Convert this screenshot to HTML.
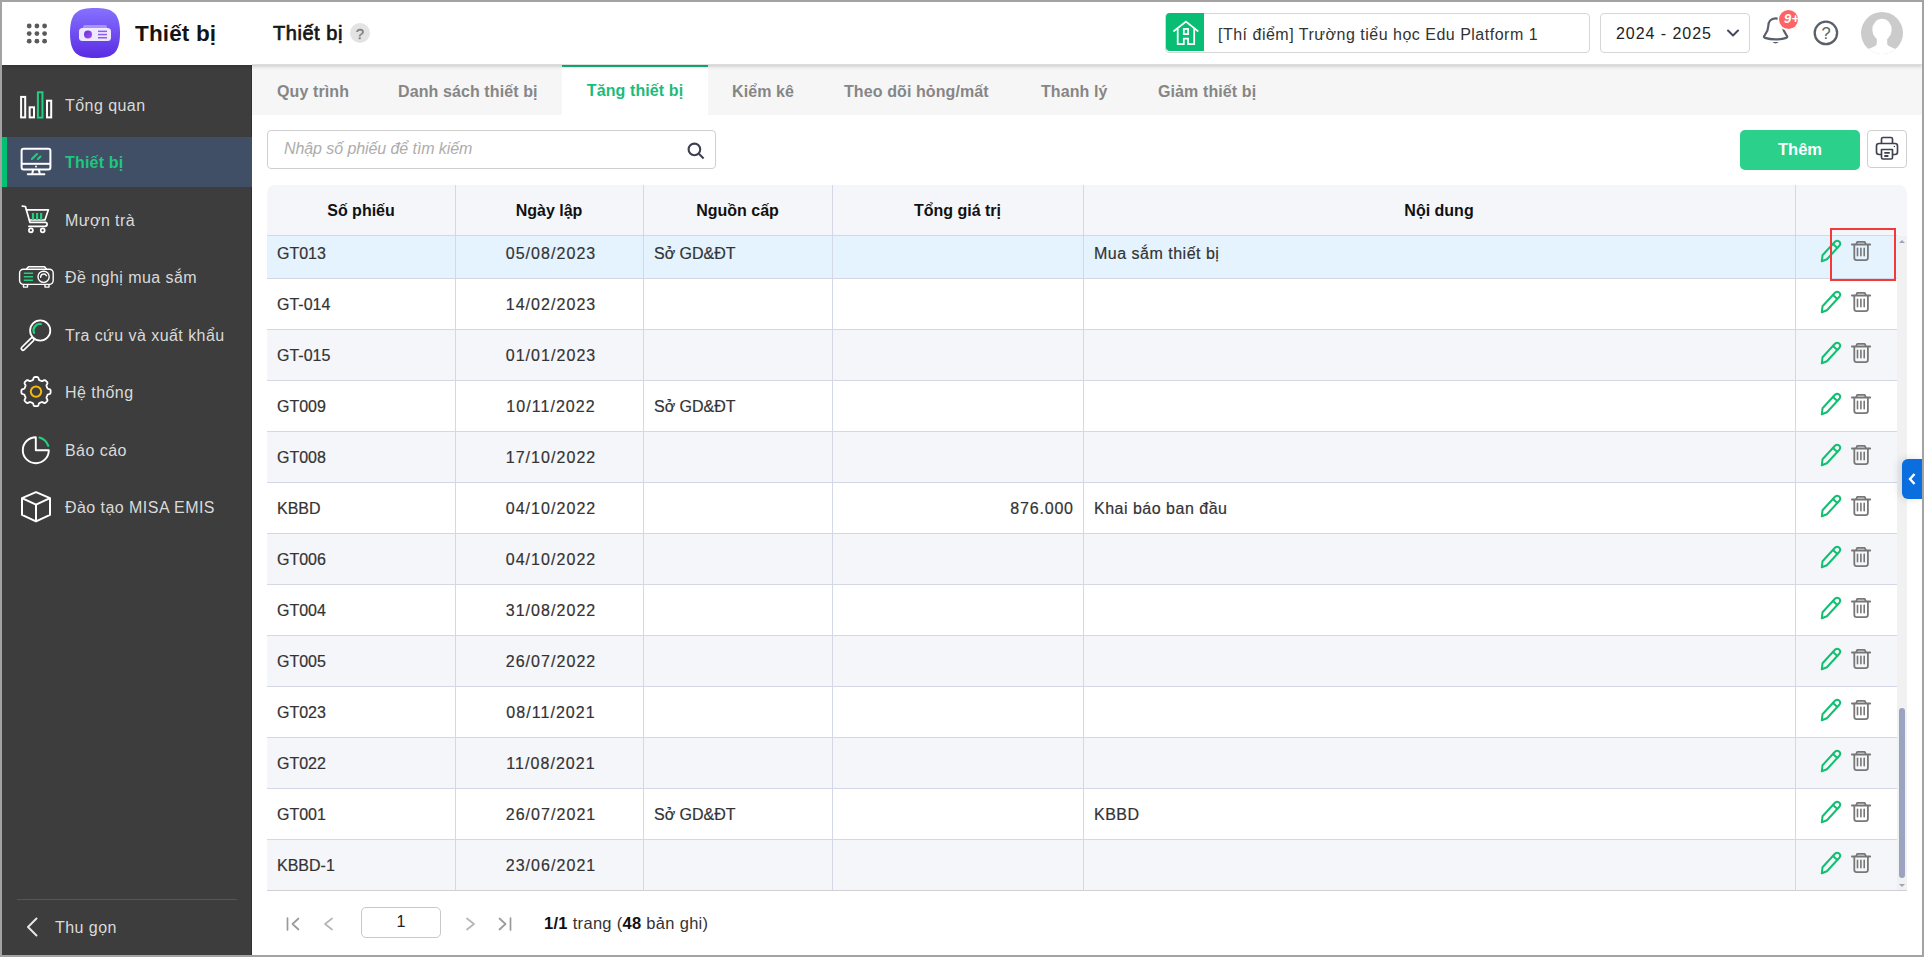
<!DOCTYPE html>
<html lang="vi">
<head>
<meta charset="utf-8">
<title>Thiết bị - Tăng thiết bị</title>
<style>
*{box-sizing:border-box;margin:0;padding:0}
html,body{width:1924px;height:957px;overflow:hidden;background:#fff}
body{font-family:"Liberation Sans",sans-serif;font-size:16px;color:#2f2f2f;position:relative}
.abs{position:absolute}
#frame{position:absolute;left:0;top:0;width:1924px;height:957px;border:2px solid #a3a3a3;z-index:100;pointer-events:none}
/* ---------- header ---------- */
#header{position:absolute;left:2px;top:2px;width:1920px;height:63px;background:#fff;box-shadow:0 1px 4px rgba(0,0,0,.22);z-index:20}
#header .t{position:absolute;white-space:nowrap}
#appname{left:133px;top:16.5px;font-size:22.5px;font-weight:bold;color:#141414;letter-spacing:.15px;line-height:30px}
#pagetitle{left:271px;top:18px;font-size:20px;font-weight:normal;-webkit-text-stroke:.7px #161616;color:#161616;line-height:26px;letter-spacing:.55px}
#qmark{position:absolute;left:348px;top:21px;width:20px;height:20px;border-radius:50%;background:#e3e3e3;color:#7a7a7a;font-size:15px;-webkit-text-stroke:.3px #7a7a7a;text-align:center;line-height:21px}
.selbox{position:absolute;top:11px;height:40px;border:1px solid #d6d6d6;border-radius:4px;background:#fff;overflow:hidden}
/* ---------- sidebar ---------- */
#sidebar{position:absolute;left:2px;top:65px;width:250px;height:890px;background:#3d3d3d;z-index:10;box-shadow:inset -1px 0 0 #313131}
.mi{position:absolute;left:0;width:250px;height:50px;color:#dadada;font-size:16px;line-height:52px;white-space:nowrap;letter-spacing:.45px}
.mi span{position:absolute;left:63px;top:0}
.mi svg{position:absolute;left:16px;top:7px}
.mi.active{background:#404e66;color:#1fc77e;font-weight:bold;letter-spacing:.2px}
.mi.active::before{content:"";position:absolute;left:0;top:0;width:5px;height:50px;background:#00c171}
/* ---------- content ---------- */
#tabs{position:absolute;left:252px;top:65px;width:1670px;height:50px;background:#f6f6f6}
.tab{position:absolute;top:0;height:50px;line-height:54px;letter-spacing:.1px;font-size:16px;font-weight:bold;color:#868686;white-space:nowrap}
.tab.on{background:#fff;color:#1dbb7a;border-top:2px solid #14b873;line-height:47px;text-align:center}
#search{position:absolute;left:267px;top:130px;width:449px;height:39px;border:1px solid #cfcfcf;border-radius:4px;background:#fff}
#search i{position:absolute;left:16px;top:0;line-height:36px;font-size:16px;color:#adadad;font-style:italic;white-space:nowrap;letter-spacing:-.08px}
#btnadd{position:absolute;left:1740px;top:130px;width:120px;height:40px;border-radius:5px;background:#2bd18b;color:#fff;font-weight:bold;font-size:16.5px;text-align:center;line-height:39px}
#btnprint{position:absolute;left:1867px;top:130px;width:40px;height:38px;border:1px solid #cfcfcf;border-radius:4px;background:#fff}
/* ---------- table ---------- */
#thead{position:absolute;left:267px;top:185px;width:1640px;height:51px;background:#f5f6fa;border-radius:8px 8px 0 0}
#thead::after{content:"";position:absolute;left:0;top:50px;width:1630px;height:1px;background:#d3d7e6}
.th{position:absolute;top:0;height:50px;line-height:52px;text-align:center;font-weight:bold;font-size:16px;color:#111}
.vl{position:absolute;top:185px;width:1px;height:705px;background:#d3d7e6;z-index:3}
.row{position:absolute;left:267px;width:1630px;height:51px;border-bottom:1px solid #d3d7e6;font-size:16px;color:#333;line-height:52px;white-space:nowrap;-webkit-text-stroke:.2px #333}
.row.g{background:#f5f6fa}
.row.sel{background:#e5f3ff}
.row .c{position:absolute;top:0;height:50px}
.c1{left:10px}
.c2{left:190px;width:188px;text-align:center;letter-spacing:1.05px}
.c3{left:387px}
.c4{left:566px;width:240.8px;text-align:right;letter-spacing:.8px}
.c5{left:827px;letter-spacing:.5px}
.row svg.pen{position:absolute;left:1552px;top:10px}
.row svg.bin{position:absolute;left:1583px;top:12px}
#vscroll{position:absolute;left:1897px;top:236px;width:10px;height:654px;background:#f1f1f1}
#vthumb{position:absolute;left:2px;top:472px;width:6px;height:169.5px;border-radius:3px;background:#9aa3bf}
#tbottom{position:absolute;left:267px;top:890px;width:1640px;height:1px;background:#cfcfd4}
#redbox{position:absolute;left:1830px;top:228px;width:66px;height:53px;border:2px solid #f23a3a;z-index:8}
#sidetab{position:absolute;left:1902px;top:459px;width:20px;height:40px;border-radius:6px 0 0 6px;background:#0b6ede;z-index:9;box-shadow:-3px 0 8px rgba(0,0,0,.12)}
/* ---------- pager ---------- */
#pager .t{position:absolute;white-space:nowrap}
#pginput{position:absolute;left:361px;top:907px;width:80px;height:31px;border:1px solid #c9c9c9;border-radius:5px;text-align:center;line-height:28px;font-size:16px;color:#222}
</style>
</head>
<body>
<div id="frame"></div>

<!-- HEADER -->
<div id="header">
  <svg class="abs" style="left:22px;top:18.500px" width="26" height="26" viewBox="0 0 26 26" fill="#5a5a5a">
    <circle cx="5.200" cy="5" r="2.400"/><circle cx="12.900" cy="5" r="2.400"/><circle cx="20.600" cy="5" r="2.400"/>
    <circle cx="5.200" cy="12.600" r="2.400"/><circle cx="12.900" cy="12.600" r="2.400"/><circle cx="20.600" cy="12.600" r="2.400"/>
    <circle cx="5.200" cy="20.200" r="2.400"/><circle cx="12.900" cy="20.200" r="2.400"/><circle cx="20.600" cy="20.200" r="2.400"/>
  </svg>
  <svg class="abs" style="left:68px;top:6px" width="50" height="50" viewBox="0 0 50 50">
    <defs><linearGradient id="pg" x1="0" y1="0" x2="0" y2="1"><stop offset="0" stop-color="#8672ff"/><stop offset="1" stop-color="#5a2be2"/></linearGradient>
    <linearGradient id="pl" x1="0" y1="0" x2="1" y2="1"><stop offset="0" stop-color="#5b33e0"/><stop offset="1" stop-color="#b14fe0"/></linearGradient></defs>
    <path d="M25 0 C42 0 50 4 50 25 C50 46 42 50 25 50 C8 50 0 46 0 25 C0 4 8 0 25 0Z" fill="url(#pg)"/>
    <path d="M13 19 Q13 17 15 17 H35 Q37 17 37 19 V21 H13Z" fill="#b9a8ff" opacity=".75"/>
    <rect x="9" y="20" width="32" height="13" rx="3.5" fill="#efe9ff"/>
    <circle cx="18" cy="26.5" r="4" fill="url(#pl)"/>
    <rect x="28" y="22.6" width="9" height="1.5" fill="#8f5be8"/><rect x="28" y="25.8" width="9" height="1.5" fill="#8f5be8"/><rect x="28" y="29" width="9" height="1.5" fill="#8f5be8"/>
  </svg>
  <div class="abs" style="left:250px;top:62px;width:1670px;height:1px;background:rgba(0,0,0,.13)"></div>
  <div class="t" id="appname">Thiết bị</div>
  <div class="t" id="pagetitle">Thiết bị</div>
  <div id="qmark">?</div>

  <div class="selbox" style="left:1163px;width:425px;height:39.500px;overflow:visible">
    <div class="abs" style="left:-.3px;top:-1px;width:38.300px;height:38.200px;background:#08bd74;border-radius:4px 0 0 4px"></div>
    <svg class="abs" style="left:6px;top:5px" width="28" height="28" viewBox="0 0 28 28" fill="none" stroke="#fff" stroke-width="1.750" stroke-linejoin="miter">
      <path d="M2 12 L13.950 2.550 L25.700 12" stroke-linecap="round"/><path d="M5.700 9.500 V25.050 H11.800 V19.600 H16.050 V25.050 H22.200 V9.500"/><rect x="11.800" y="9.950" width="4.300" height="5.200"/>
    </svg>
    <div class="abs" style="left:52px;top:0;line-height:41px;font-size:16px;color:#333;white-space:nowrap;letter-spacing:.5px">[Thí điểm] Trường tiểu học Edu Platform 1</div>
  </div>
  <div class="selbox" style="left:1598px;width:150px">
    <div class="abs" style="left:15px;top:0;line-height:40px;font-size:16px;color:#222;white-space:nowrap;letter-spacing:.95px">2024 - 2025</div>
    <svg class="abs" style="left:125px;top:14px" width="14" height="10" viewBox="0 0 14 10" fill="none" stroke="#444a5c" stroke-width="2" stroke-linecap="round" stroke-linejoin="round"><path d="M2 2.5 L7 7.5 L12 2.5"/></svg>
  </div>
  <!-- bell -->
  <svg class="abs" style="left:1758px;top:12px" width="32" height="34" viewBox="0 0 32 34" fill="none" stroke="#5a616c" stroke-width="2.200" stroke-linecap="round" stroke-linejoin="round">
    <path d="M15.600 4.300 C10.500 4.300 8.300 8 8.300 12 C8.300 17 6 19.500 4.300 21.800 C3.600 22.900 4 23.600 5 23.900 C11 25.900 20.200 25.900 26.200 23.900 C27.200 23.600 27.600 22.900 26.900 21.800 C25.200 19.500 22.900 17 22.900 12 C22.900 8 20.700 4.300 15.600 4.300Z"/>
    <path d="M12.400 28.100 Q15.600 30.800 18.800 28.100 Z" fill="#5a616c" stroke="none"/>
  </svg>
  <div class="abs" style="left:1777px;top:8px;width:19px;height:19px;border-radius:50%;background:#ff6464;box-shadow:0 0 0 1.500px #fff;color:#fff;font-size:13px;font-weight:bold;font-style:italic;line-height:18px;overflow:hidden;white-space:nowrap;padding-left:5px;letter-spacing:.3px">9+</div>
  <!-- help -->
  <svg class="abs" style="left:1811px;top:18px" width="26" height="26" viewBox="0 0 26 26" fill="none" stroke="#596068" stroke-width="2.300"><circle cx="12.900" cy="12.900" r="11.200"/></svg>
  <div class="abs" style="left:1811px;top:18px;width:26px;height:26px;text-align:center;line-height:27px;font-size:16.500px;color:#596068">?</div>
  <!-- avatar -->
  <svg class="abs" style="left:1859px;top:10px" width="42" height="42" viewBox="0 0 42 42">
    <defs><clipPath id="avc"><circle cx="21" cy="21" r="21"/></clipPath></defs>
    <circle cx="21" cy="21" r="21" fill="#cbcbcb"/>
    <g clip-path="url(#avc)" fill="#fff"><ellipse cx="21" cy="17.600" rx="9.700" ry="10.900"/><path d="M15.800 25 H26.200 V31.500 C26.200 33.500 29 35.200 36 37.200 L37 44 H5 L6 37.200 C13 35.200 15.800 33.500 15.800 31.500Z"/></g>
  </svg>
</div>

<!-- SIDEBAR -->
<div id="sidebar">
  <div class="mi" style="top:15px"><svg width="36" height="36" viewBox="0 0 36 36" overflow="visible"><g fill="none" stroke-width="2"><rect x="3.100" y="9.900" width="4.100" height="20.500" stroke="#fff"/><rect x="11.650" y="20.300" width="4.350" height="10.100" stroke="#fff"/><rect x="19.900" y="5.300" width="4.550" height="25.300" stroke="#1fd07f"/><rect x="29" y="13.700" width="4.200" height="16.700" stroke="#fff"/></g></svg><span>Tổng quan</span></div>
  <div class="mi active" style="top:72px"><svg width="36" height="36" viewBox="0 0 36 36" overflow="visible"><g fill="none" stroke="#fff" stroke-width="2" stroke-linejoin="round"><rect x="3.600" y="4.800" width="28.800" height="20.600" rx="2"/><path d="M3.600 19.800 H32.400"/><path d="M15.200 25.600 L14.200 29.800 M20.800 25.600 L21.800 29.800"/><path d="M9.800 30.200 H26.400" stroke-linecap="round"/></g><rect x="17.200" y="21.700" width="1.700" height="1.700" fill="#fff"/><path d="M13.900 15 L19 10 M19.900 15 L22.500 12.500" stroke="#1fd07f" stroke-width="2.100" stroke-linecap="round"/></svg><span>Thiết bị</span></div>
  <div class="mi" style="top:130px"><svg width="36" height="36" viewBox="0 0 36 36" overflow="visible"><g fill="none" stroke="#fff" stroke-width="1.700" stroke-linejoin="round" stroke-linecap="round"><path d="M4.300 4.200 L7.400 4.500 L12 20.400 H27.200 Q29.200 20.500 29.100 22.400 Q29 24.200 26.900 24.300 H10.900"/><path d="M8.400 7.800 H30.400 L26.900 18 H11.400"/><circle cx="12.900" cy="28.300" r="2"/><circle cx="24.700" cy="28.300" r="2"/></g><path d="M15 11.100 V17.700 M19.100 11.100 V17.700 M23.150 11.100 V17.700" stroke="#1fd07f" stroke-width="2.200"/></svg><span>Mượn trà</span></div>
  <div class="mi" style="top:187px"><svg width="36" height="36" viewBox="0 0 36 36" overflow="visible"><g fill="none" stroke="#fff" stroke-width="1.400" stroke-linejoin="round"><rect x="1.600" y="10.200" width="33.600" height="15.200" rx="3.800"/><path d="M8.500 10 L10.500 7.800 H26.500 L28.500 10" stroke-width="1.600"/><path d="M5.500 25.600 V28.100 H9.500 V25.600 M27 25.600 V28.100 H31 V25.600"/><circle cx="25.600" cy="17.800" r="5.600"/><path d="M22.700 18.300 A3 3 0 0 1 28.400 16.700" stroke-linecap="round"/></g><path d="M5.800 14.300 H15 M5.800 17.800 H15 M5.800 21.300 H15" stroke="#1fd07f" stroke-width="1.600"/></svg><span>Đề nghị mua sắm</span></div>
  <div class="mi" style="top:245px"><svg width="36" height="36" viewBox="0 0 36 36" overflow="visible"><circle cx="22.200" cy="13.500" r="10.100" fill="none" stroke="#fff" stroke-width="1.800"/><path d="M14.300 22.400 L5 31.500" stroke="#fff" stroke-width="5.200" stroke-linecap="round"/><path d="M14.100 22.600 L5.100 31.400" stroke="#3d3d3d" stroke-width="1.900" stroke-linecap="round"/><path d="M16 15.900 A6.500 6.500 0 0 1 22.900 7" fill="none" stroke="#1fd07f" stroke-width="2.200" stroke-linecap="round"/></svg><span>Tra cứu và xuất khẩu</span></div>
  <div class="mi" style="top:302px"><svg width="36" height="36" viewBox="0 0 36 36" overflow="visible"><path d="M18.00 2.97 L18.48 2.98 L18.96 3.01 L19.43 3.09 L19.89 3.27 L20.29 3.72 L20.58 4.60 L20.82 5.50 L21.12 5.97 L21.46 6.19 L21.82 6.35 L22.18 6.49 L22.54 6.64 L22.90 6.79 L23.25 6.94 L23.62 7.09 L24.02 7.17 L24.56 7.05 L25.36 6.58 L26.20 6.16 L26.80 6.13 L27.25 6.33 L27.64 6.61 L28.00 6.92 L28.35 7.25 L28.68 7.60 L28.99 7.96 L29.27 8.35 L29.47 8.80 L29.44 9.40 L29.02 10.24 L28.55 11.04 L28.43 11.58 L28.51 11.98 L28.66 12.35 L28.81 12.70 L28.96 13.06 L29.11 13.42 L29.25 13.78 L29.41 14.14 L29.63 14.48 L30.10 14.78 L31.00 15.02 L31.88 15.31 L32.33 15.71 L32.51 16.17 L32.59 16.64 L32.62 17.12 L32.63 17.60 L32.62 18.08 L32.59 18.56 L32.51 19.03 L32.33 19.49 L31.88 19.89 L31.00 20.18 L30.10 20.42 L29.63 20.72 L29.41 21.06 L29.25 21.42 L29.11 21.78 L28.96 22.14 L28.81 22.50 L28.66 22.85 L28.51 23.22 L28.43 23.62 L28.55 24.16 L29.02 24.96 L29.44 25.80 L29.47 26.40 L29.27 26.85 L28.99 27.24 L28.68 27.60 L28.35 27.95 L28.00 28.28 L27.64 28.59 L27.25 28.87 L26.80 29.07 L26.20 29.04 L25.36 28.62 L24.56 28.15 L24.02 28.03 L23.62 28.11 L23.25 28.26 L22.90 28.41 L22.54 28.56 L22.18 28.71 L21.82 28.85 L21.46 29.01 L21.12 29.23 L20.82 29.70 L20.58 30.60 L20.29 31.48 L19.89 31.93 L19.43 32.11 L18.96 32.19 L18.48 32.22 L18.00 32.23 L17.52 32.22 L17.04 32.19 L16.57 32.11 L16.11 31.93 L15.71 31.48 L15.42 30.60 L15.18 29.70 L14.88 29.23 L14.54 29.01 L14.18 28.85 L13.82 28.71 L13.46 28.56 L13.10 28.41 L12.75 28.26 L12.38 28.11 L11.98 28.03 L11.44 28.15 L10.64 28.62 L9.80 29.04 L9.20 29.07 L8.75 28.87 L8.36 28.59 L8.00 28.28 L7.65 27.95 L7.32 27.60 L7.01 27.24 L6.73 26.85 L6.53 26.40 L6.56 25.80 L6.98 24.96 L7.45 24.16 L7.57 23.62 L7.49 23.22 L7.34 22.85 L7.19 22.50 L7.04 22.14 L6.89 21.78 L6.75 21.42 L6.59 21.06 L6.37 20.72 L5.90 20.42 L5.00 20.18 L4.12 19.89 L3.67 19.49 L3.49 19.03 L3.41 18.56 L3.38 18.08 L3.37 17.60 L3.38 17.12 L3.41 16.64 L3.49 16.17 L3.67 15.71 L4.12 15.31 L5.00 15.02 L5.90 14.78 L6.37 14.48 L6.59 14.14 L6.75 13.78 L6.89 13.42 L7.04 13.06 L7.19 12.70 L7.34 12.35 L7.49 11.98 L7.57 11.58 L7.45 11.04 L6.98 10.24 L6.56 9.40 L6.53 8.80 L6.73 8.35 L7.01 7.96 L7.32 7.60 L7.65 7.25 L8.00 6.92 L8.36 6.61 L8.75 6.33 L9.20 6.13 L9.80 6.16 L10.64 6.58 L11.44 7.05 L11.98 7.17 L12.38 7.09 L12.75 6.94 L13.10 6.79 L13.46 6.64 L13.82 6.49 L14.18 6.35 L14.54 6.19 L14.88 5.97 L15.18 5.50 L15.42 4.60 L15.71 3.72 L16.11 3.27 L16.57 3.09 L17.04 3.01 L17.52 2.98Z" fill="none" stroke="#fff" stroke-width="1.800" stroke-linejoin="round"/><circle cx="18" cy="17.600" r="5.200" fill="none" stroke="#f5b90a" stroke-width="2"/></svg><span>Hệ thống</span></div>
  <div class="mi" style="top:360px"><svg width="36" height="36" viewBox="0 0 36 36" overflow="visible"><path d="M17.800 5.200 A13 13 0 1 0 30.800 18.200 H17.800 Z" fill="none" stroke="#fff" stroke-width="1.900" stroke-linejoin="round"/><path d="M21.500 5.500 A13.200 13.200 0 0 1 30.300 13.800" fill="none" stroke="#1fd07f" stroke-width="2.100" stroke-linecap="round"/></svg><span>Báo cáo</span></div>
  <div class="mi" style="top:417px"><svg width="36" height="36" viewBox="0 0 36 36" overflow="visible"><g fill="none" stroke="#fff" stroke-width="2" stroke-linejoin="round"><path d="M18 3.200 L32 9.200 V25.800 L18 32.400 L4 25.800 V9.200 Z"/><path d="M4 9.200 L18 15.600 L32 9.200 M18 15.600 V32.400"/></g></svg><span>Đào tạo MISA EMIS</span></div>
  <div class="abs" style="left:15px;top:834px;width:220px;height:1px;background:#4a566b"></div>
  <svg class="abs" style="left:22px;top:850px" width="16" height="24" viewBox="0 0 16 24" fill="none" stroke="#e6e6e6" stroke-width="2" stroke-linecap="round" stroke-linejoin="round"><path d="M12.500 3.500 L4 12 L12.500 20.500"/></svg>
  <div class="abs" style="left:53px;top:850px;line-height:26px;font-size:16px;color:#dadada;white-space:nowrap;letter-spacing:.45px">Thu gọn</div>
</div>

<!-- TABS -->
<div id="tabs">
  <div class="tab" style="left:25px">Quy trình</div>
  <div class="tab" style="left:146px">Danh sách thiết bị</div>
  <div class="tab on" style="left:310px;width:146px">Tăng thiết bị</div>
  <div class="tab" style="left:480px">Kiểm kê</div>
  <div class="tab" style="left:592px">Theo dõi hỏng/mất</div>
  <div class="tab" style="left:789px">Thanh lý</div>
  <div class="tab" style="left:906px">Giảm thiết bị</div>
</div>

<!-- TOOLBAR -->
<div id="search"><i>Nhập số phiếu để tìm kiếm</i><svg class="abs" style="left:418px;top:10px" width="20" height="20" viewBox="0 0 20 20" fill="none" stroke="#3d4050" stroke-width="2.100"><circle cx="8.400" cy="8.400" r="5.800"/><path d="M12.600 12.600 L17.600 17.600"/></svg></div>
<div id="btnadd">Thêm</div>
<div id="btnprint"><svg class="abs" style="left:7px;top:3.500px" width="24" height="26" viewBox="0 0 24 26" fill="none" stroke="#3e4150" stroke-width="1.650" stroke-linejoin="round"><path d="M6.500 8.500 V4 Q6.500 2.500 8 2.500 H16 Q17.500 2.500 17.500 4 V8.500"/><path d="M6 19.500 H4 Q1.500 19.500 1.500 17 V11 Q1.500 8.500 4 8.500 H20 Q22.500 8.500 22.500 11 V17 Q22.500 19.500 20 19.500 H18"/><path d="M6.500 14.500 H17.500 V22.500 Q17.500 24 16 24 H8 Q6.500 24 6.500 22.500 Z"/><path d="M9.300 17.900 H14.800 M9.300 21 H13.400" stroke-width="1.800"/><circle cx="19.400" cy="11.500" r=".75" fill="#3e4150" stroke="none"/></svg></div>

<!-- TABLE -->
<div id="thead">
  <div class="th" style="left:0px;width:188px">Số phiếu</div>
  <div class="th" style="left:188px;width:188px">Ngày lập</div>
  <div class="th" style="left:376px;width:189px">Nguồn cấp</div>
  <div class="th" style="left:565px;width:251px">Tổng giá trị</div>
  <div class="th" style="left:816px;width:712px">Nội dung</div>
</div>
<div id="tbody" class="abs" style="left:0;top:236px;width:1924px;height:654px;overflow:hidden">
  <div class="row sel" style="top:-8px"><div class="c c1">GT013</div><div class="c c2">05/08/2023</div><div class="c c3">Sở GD&amp;ĐT</div><div class="c c5">Mua sắm thiết bị</div><svg class="pen" width="24" height="26" viewBox="0 0 24 26" fill="none" stroke="#10c070" stroke-width="2" stroke-linejoin="round" stroke-linecap="round"><path d="M3.500 17.300 L16.200 3.500 A3 3 0 0 1 20.600 7.500 L7.900 21.300 L2.800 23.300 Z"/><path d="M14 5.900 L18.400 9.900"/></svg><svg class="bin" width="22" height="22" viewBox="0 0 22 22" fill="none" stroke="#777" stroke-width="1.800" stroke-linejoin="round" stroke-linecap="round"><path d="M1.900 4.500 H20.200"/><path d="M6.200 4.100 L7.200 1.800 H14.700 L15.800 4.100"/><path d="M4.300 5 V17.700 Q4.300 20.100 6.700 20.100 H15.500 Q17.900 20.100 17.900 17.700 V5"/><path d="M7.500 8.300 V15.800 M10.900 8.300 V15.800 M14.200 8.300 V15.800" stroke-width="1.600"/></svg></div>
  <div class="row" style="top:43px"><div class="c c1">GT-014</div><div class="c c2">14/02/2023</div><svg class="pen" width="24" height="26" viewBox="0 0 24 26" fill="none" stroke="#10c070" stroke-width="2" stroke-linejoin="round" stroke-linecap="round"><path d="M3.500 17.300 L16.200 3.500 A3 3 0 0 1 20.600 7.500 L7.900 21.300 L2.800 23.300 Z"/><path d="M14 5.900 L18.400 9.900"/></svg><svg class="bin" width="22" height="22" viewBox="0 0 22 22" fill="none" stroke="#777" stroke-width="1.800" stroke-linejoin="round" stroke-linecap="round"><path d="M1.900 4.500 H20.200"/><path d="M6.200 4.100 L7.200 1.800 H14.700 L15.800 4.100"/><path d="M4.300 5 V17.700 Q4.300 20.100 6.700 20.100 H15.500 Q17.900 20.100 17.900 17.700 V5"/><path d="M7.500 8.300 V15.800 M10.900 8.300 V15.800 M14.200 8.300 V15.800" stroke-width="1.600"/></svg></div>
  <div class="row g" style="top:94px"><div class="c c1">GT-015</div><div class="c c2">01/01/2023</div><svg class="pen" width="24" height="26" viewBox="0 0 24 26" fill="none" stroke="#10c070" stroke-width="2" stroke-linejoin="round" stroke-linecap="round"><path d="M3.500 17.300 L16.200 3.500 A3 3 0 0 1 20.600 7.500 L7.900 21.300 L2.800 23.300 Z"/><path d="M14 5.900 L18.400 9.900"/></svg><svg class="bin" width="22" height="22" viewBox="0 0 22 22" fill="none" stroke="#777" stroke-width="1.800" stroke-linejoin="round" stroke-linecap="round"><path d="M1.900 4.500 H20.200"/><path d="M6.200 4.100 L7.200 1.800 H14.700 L15.800 4.100"/><path d="M4.300 5 V17.700 Q4.300 20.100 6.700 20.100 H15.500 Q17.900 20.100 17.900 17.700 V5"/><path d="M7.500 8.300 V15.800 M10.900 8.300 V15.800 M14.200 8.300 V15.800" stroke-width="1.600"/></svg></div>
  <div class="row" style="top:145px"><div class="c c1">GT009</div><div class="c c2">10/11/2022</div><div class="c c3">Sở GD&amp;ĐT</div><svg class="pen" width="24" height="26" viewBox="0 0 24 26" fill="none" stroke="#10c070" stroke-width="2" stroke-linejoin="round" stroke-linecap="round"><path d="M3.500 17.300 L16.200 3.500 A3 3 0 0 1 20.600 7.500 L7.900 21.300 L2.800 23.300 Z"/><path d="M14 5.900 L18.400 9.900"/></svg><svg class="bin" width="22" height="22" viewBox="0 0 22 22" fill="none" stroke="#777" stroke-width="1.800" stroke-linejoin="round" stroke-linecap="round"><path d="M1.900 4.500 H20.200"/><path d="M6.200 4.100 L7.200 1.800 H14.700 L15.800 4.100"/><path d="M4.300 5 V17.700 Q4.300 20.100 6.700 20.100 H15.500 Q17.900 20.100 17.900 17.700 V5"/><path d="M7.500 8.300 V15.800 M10.900 8.300 V15.800 M14.200 8.300 V15.800" stroke-width="1.600"/></svg></div>
  <div class="row g" style="top:196px"><div class="c c1">GT008</div><div class="c c2">17/10/2022</div><svg class="pen" width="24" height="26" viewBox="0 0 24 26" fill="none" stroke="#10c070" stroke-width="2" stroke-linejoin="round" stroke-linecap="round"><path d="M3.500 17.300 L16.200 3.500 A3 3 0 0 1 20.600 7.500 L7.900 21.300 L2.800 23.300 Z"/><path d="M14 5.900 L18.400 9.900"/></svg><svg class="bin" width="22" height="22" viewBox="0 0 22 22" fill="none" stroke="#777" stroke-width="1.800" stroke-linejoin="round" stroke-linecap="round"><path d="M1.900 4.500 H20.200"/><path d="M6.200 4.100 L7.200 1.800 H14.700 L15.800 4.100"/><path d="M4.300 5 V17.700 Q4.300 20.100 6.700 20.100 H15.500 Q17.900 20.100 17.900 17.700 V5"/><path d="M7.500 8.300 V15.800 M10.900 8.300 V15.800 M14.200 8.300 V15.800" stroke-width="1.600"/></svg></div>
  <div class="row" style="top:247px"><div class="c c1">KBBD</div><div class="c c2">04/10/2022</div><div class="c c4">876.000</div><div class="c c5">Khai báo ban đầu</div><svg class="pen" width="24" height="26" viewBox="0 0 24 26" fill="none" stroke="#10c070" stroke-width="2" stroke-linejoin="round" stroke-linecap="round"><path d="M3.500 17.300 L16.200 3.500 A3 3 0 0 1 20.600 7.500 L7.900 21.300 L2.800 23.300 Z"/><path d="M14 5.900 L18.400 9.900"/></svg><svg class="bin" width="22" height="22" viewBox="0 0 22 22" fill="none" stroke="#777" stroke-width="1.800" stroke-linejoin="round" stroke-linecap="round"><path d="M1.900 4.500 H20.200"/><path d="M6.200 4.100 L7.200 1.800 H14.700 L15.800 4.100"/><path d="M4.300 5 V17.700 Q4.300 20.100 6.700 20.100 H15.500 Q17.900 20.100 17.900 17.700 V5"/><path d="M7.500 8.300 V15.800 M10.900 8.300 V15.800 M14.200 8.300 V15.800" stroke-width="1.600"/></svg></div>
  <div class="row g" style="top:298px"><div class="c c1">GT006</div><div class="c c2">04/10/2022</div><svg class="pen" width="24" height="26" viewBox="0 0 24 26" fill="none" stroke="#10c070" stroke-width="2" stroke-linejoin="round" stroke-linecap="round"><path d="M3.500 17.300 L16.200 3.500 A3 3 0 0 1 20.600 7.500 L7.900 21.300 L2.800 23.300 Z"/><path d="M14 5.900 L18.400 9.900"/></svg><svg class="bin" width="22" height="22" viewBox="0 0 22 22" fill="none" stroke="#777" stroke-width="1.800" stroke-linejoin="round" stroke-linecap="round"><path d="M1.900 4.500 H20.200"/><path d="M6.200 4.100 L7.200 1.800 H14.700 L15.800 4.100"/><path d="M4.300 5 V17.700 Q4.300 20.100 6.700 20.100 H15.500 Q17.900 20.100 17.900 17.700 V5"/><path d="M7.500 8.300 V15.800 M10.900 8.300 V15.800 M14.200 8.300 V15.800" stroke-width="1.600"/></svg></div>
  <div class="row" style="top:349px"><div class="c c1">GT004</div><div class="c c2">31/08/2022</div><svg class="pen" width="24" height="26" viewBox="0 0 24 26" fill="none" stroke="#10c070" stroke-width="2" stroke-linejoin="round" stroke-linecap="round"><path d="M3.500 17.300 L16.200 3.500 A3 3 0 0 1 20.600 7.500 L7.900 21.300 L2.800 23.300 Z"/><path d="M14 5.900 L18.400 9.900"/></svg><svg class="bin" width="22" height="22" viewBox="0 0 22 22" fill="none" stroke="#777" stroke-width="1.800" stroke-linejoin="round" stroke-linecap="round"><path d="M1.900 4.500 H20.200"/><path d="M6.200 4.100 L7.200 1.800 H14.700 L15.800 4.100"/><path d="M4.300 5 V17.700 Q4.300 20.100 6.700 20.100 H15.500 Q17.900 20.100 17.900 17.700 V5"/><path d="M7.500 8.300 V15.800 M10.900 8.300 V15.800 M14.200 8.300 V15.800" stroke-width="1.600"/></svg></div>
  <div class="row g" style="top:400px"><div class="c c1">GT005</div><div class="c c2">26/07/2022</div><svg class="pen" width="24" height="26" viewBox="0 0 24 26" fill="none" stroke="#10c070" stroke-width="2" stroke-linejoin="round" stroke-linecap="round"><path d="M3.500 17.300 L16.200 3.500 A3 3 0 0 1 20.600 7.500 L7.900 21.300 L2.800 23.300 Z"/><path d="M14 5.900 L18.400 9.900"/></svg><svg class="bin" width="22" height="22" viewBox="0 0 22 22" fill="none" stroke="#777" stroke-width="1.800" stroke-linejoin="round" stroke-linecap="round"><path d="M1.900 4.500 H20.200"/><path d="M6.200 4.100 L7.200 1.800 H14.700 L15.800 4.100"/><path d="M4.300 5 V17.700 Q4.300 20.100 6.700 20.100 H15.500 Q17.900 20.100 17.900 17.700 V5"/><path d="M7.500 8.300 V15.800 M10.900 8.300 V15.800 M14.200 8.300 V15.800" stroke-width="1.600"/></svg></div>
  <div class="row" style="top:451px"><div class="c c1">GT023</div><div class="c c2">08/11/2021</div><svg class="pen" width="24" height="26" viewBox="0 0 24 26" fill="none" stroke="#10c070" stroke-width="2" stroke-linejoin="round" stroke-linecap="round"><path d="M3.500 17.300 L16.200 3.500 A3 3 0 0 1 20.600 7.500 L7.900 21.300 L2.800 23.300 Z"/><path d="M14 5.900 L18.400 9.900"/></svg><svg class="bin" width="22" height="22" viewBox="0 0 22 22" fill="none" stroke="#777" stroke-width="1.800" stroke-linejoin="round" stroke-linecap="round"><path d="M1.900 4.500 H20.200"/><path d="M6.200 4.100 L7.200 1.800 H14.700 L15.800 4.100"/><path d="M4.300 5 V17.700 Q4.300 20.100 6.700 20.100 H15.500 Q17.900 20.100 17.900 17.700 V5"/><path d="M7.500 8.300 V15.800 M10.900 8.300 V15.800 M14.200 8.300 V15.800" stroke-width="1.600"/></svg></div>
  <div class="row g" style="top:502px"><div class="c c1">GT022</div><div class="c c2">11/08/2021</div><svg class="pen" width="24" height="26" viewBox="0 0 24 26" fill="none" stroke="#10c070" stroke-width="2" stroke-linejoin="round" stroke-linecap="round"><path d="M3.500 17.300 L16.200 3.500 A3 3 0 0 1 20.600 7.500 L7.900 21.300 L2.800 23.300 Z"/><path d="M14 5.900 L18.400 9.900"/></svg><svg class="bin" width="22" height="22" viewBox="0 0 22 22" fill="none" stroke="#777" stroke-width="1.800" stroke-linejoin="round" stroke-linecap="round"><path d="M1.900 4.500 H20.200"/><path d="M6.200 4.100 L7.200 1.800 H14.700 L15.800 4.100"/><path d="M4.300 5 V17.700 Q4.300 20.100 6.700 20.100 H15.500 Q17.900 20.100 17.900 17.700 V5"/><path d="M7.500 8.300 V15.800 M10.900 8.300 V15.800 M14.200 8.300 V15.800" stroke-width="1.600"/></svg></div>
  <div class="row" style="top:553px"><div class="c c1">GT001</div><div class="c c2">26/07/2021</div><div class="c c3">Sở GD&amp;ĐT</div><div class="c c5">KBBD</div><svg class="pen" width="24" height="26" viewBox="0 0 24 26" fill="none" stroke="#10c070" stroke-width="2" stroke-linejoin="round" stroke-linecap="round"><path d="M3.500 17.300 L16.200 3.500 A3 3 0 0 1 20.600 7.500 L7.900 21.300 L2.800 23.300 Z"/><path d="M14 5.900 L18.400 9.900"/></svg><svg class="bin" width="22" height="22" viewBox="0 0 22 22" fill="none" stroke="#777" stroke-width="1.800" stroke-linejoin="round" stroke-linecap="round"><path d="M1.900 4.500 H20.200"/><path d="M6.200 4.100 L7.200 1.800 H14.700 L15.800 4.100"/><path d="M4.300 5 V17.700 Q4.300 20.100 6.700 20.100 H15.500 Q17.900 20.100 17.900 17.700 V5"/><path d="M7.500 8.300 V15.800 M10.900 8.300 V15.800 M14.200 8.300 V15.800" stroke-width="1.600"/></svg></div>
  <div class="row g" style="top:604px"><div class="c c1">KBBD-1</div><div class="c c2">23/06/2021</div><svg class="pen" width="24" height="26" viewBox="0 0 24 26" fill="none" stroke="#10c070" stroke-width="2" stroke-linejoin="round" stroke-linecap="round"><path d="M3.500 17.300 L16.200 3.500 A3 3 0 0 1 20.600 7.500 L7.900 21.300 L2.800 23.300 Z"/><path d="M14 5.900 L18.400 9.900"/></svg><svg class="bin" width="22" height="22" viewBox="0 0 22 22" fill="none" stroke="#777" stroke-width="1.800" stroke-linejoin="round" stroke-linecap="round"><path d="M1.900 4.500 H20.200"/><path d="M6.200 4.100 L7.200 1.800 H14.700 L15.800 4.100"/><path d="M4.300 5 V17.700 Q4.300 20.100 6.700 20.100 H15.500 Q17.900 20.100 17.900 17.700 V5"/><path d="M7.500 8.300 V15.800 M10.900 8.300 V15.800 M14.200 8.300 V15.800" stroke-width="1.600"/></svg></div>
</div>
<div class="vl" style="left:455px"></div><div class="vl" style="left:643px"></div><div class="vl" style="left:832px"></div><div class="vl" style="left:1083px"></div><div class="vl" style="left:1795px"></div>
<div id="vscroll"><div id="vthumb"></div><div class="abs" style="left:2px;top:3.800px;width:0;height:0;border-left:3px solid transparent;border-right:3px solid transparent;border-bottom:3px solid #9aa3bf"></div><div class="abs" style="left:2px;top:647.5px;width:0;height:0;border-left:3px solid transparent;border-right:3px solid transparent;border-top:3px solid #9aa3bf"></div></div>
<div id="tbottom"></div>
<div id="redbox"></div>
<div id="sidetab"><svg class="abs" style="left:5px;top:12px" width="10" height="16" viewBox="0 0 10 16" fill="none" stroke="#fff" stroke-width="2.400" stroke-linejoin="miter"><path d="M7.500 3 L3 8 L7.500 13"/></svg></div>

<!-- PAGER -->
<div id="pager">
  <svg class="abs" style="left:285px;top:915px" width="16" height="18" viewBox="0 0 16 18" fill="none" stroke="#9a9a9a" stroke-width="1.700" stroke-linecap="round" stroke-linejoin="round"><path d="M2.500 3 V15 M13.500 3.500 L7.500 9 L13.500 14.500"/></svg>
  <svg class="abs" style="left:320px;top:915px" width="16" height="18" viewBox="0 0 16 18" fill="none" stroke="#9a9a9a" stroke-width="1.700" stroke-linecap="round" stroke-linejoin="round"><path d="M12 3.500 L5 9 L12 14.500" stroke="#b5b5b5"/></svg>
  <div id="pginput">1</div>
  <svg class="abs" style="left:462px;top:915px" width="16" height="18" viewBox="0 0 16 18" fill="none" stroke="#9a9a9a" stroke-width="1.700" stroke-linecap="round" stroke-linejoin="round"><path d="M5 3.500 L12 9 L5 14.500" stroke="#b5b5b5"/></svg>
  <svg class="abs" style="left:497px;top:915px" width="16" height="18" viewBox="0 0 16 18" fill="none" stroke="#9a9a9a" stroke-width="1.700" stroke-linecap="round" stroke-linejoin="round"><path d="M13.500 3 V15 M2.500 3.500 L8.500 9 L2.500 14.500"/></svg>
  <div class="t" style="left:544px;top:910px;line-height:26px;font-size:16.500px;color:#333;letter-spacing:.3px"><b style="color:#111">1/1</b> trang (<b style="color:#111">48</b> bản ghi)</div>
</div>
</body>
</html>
